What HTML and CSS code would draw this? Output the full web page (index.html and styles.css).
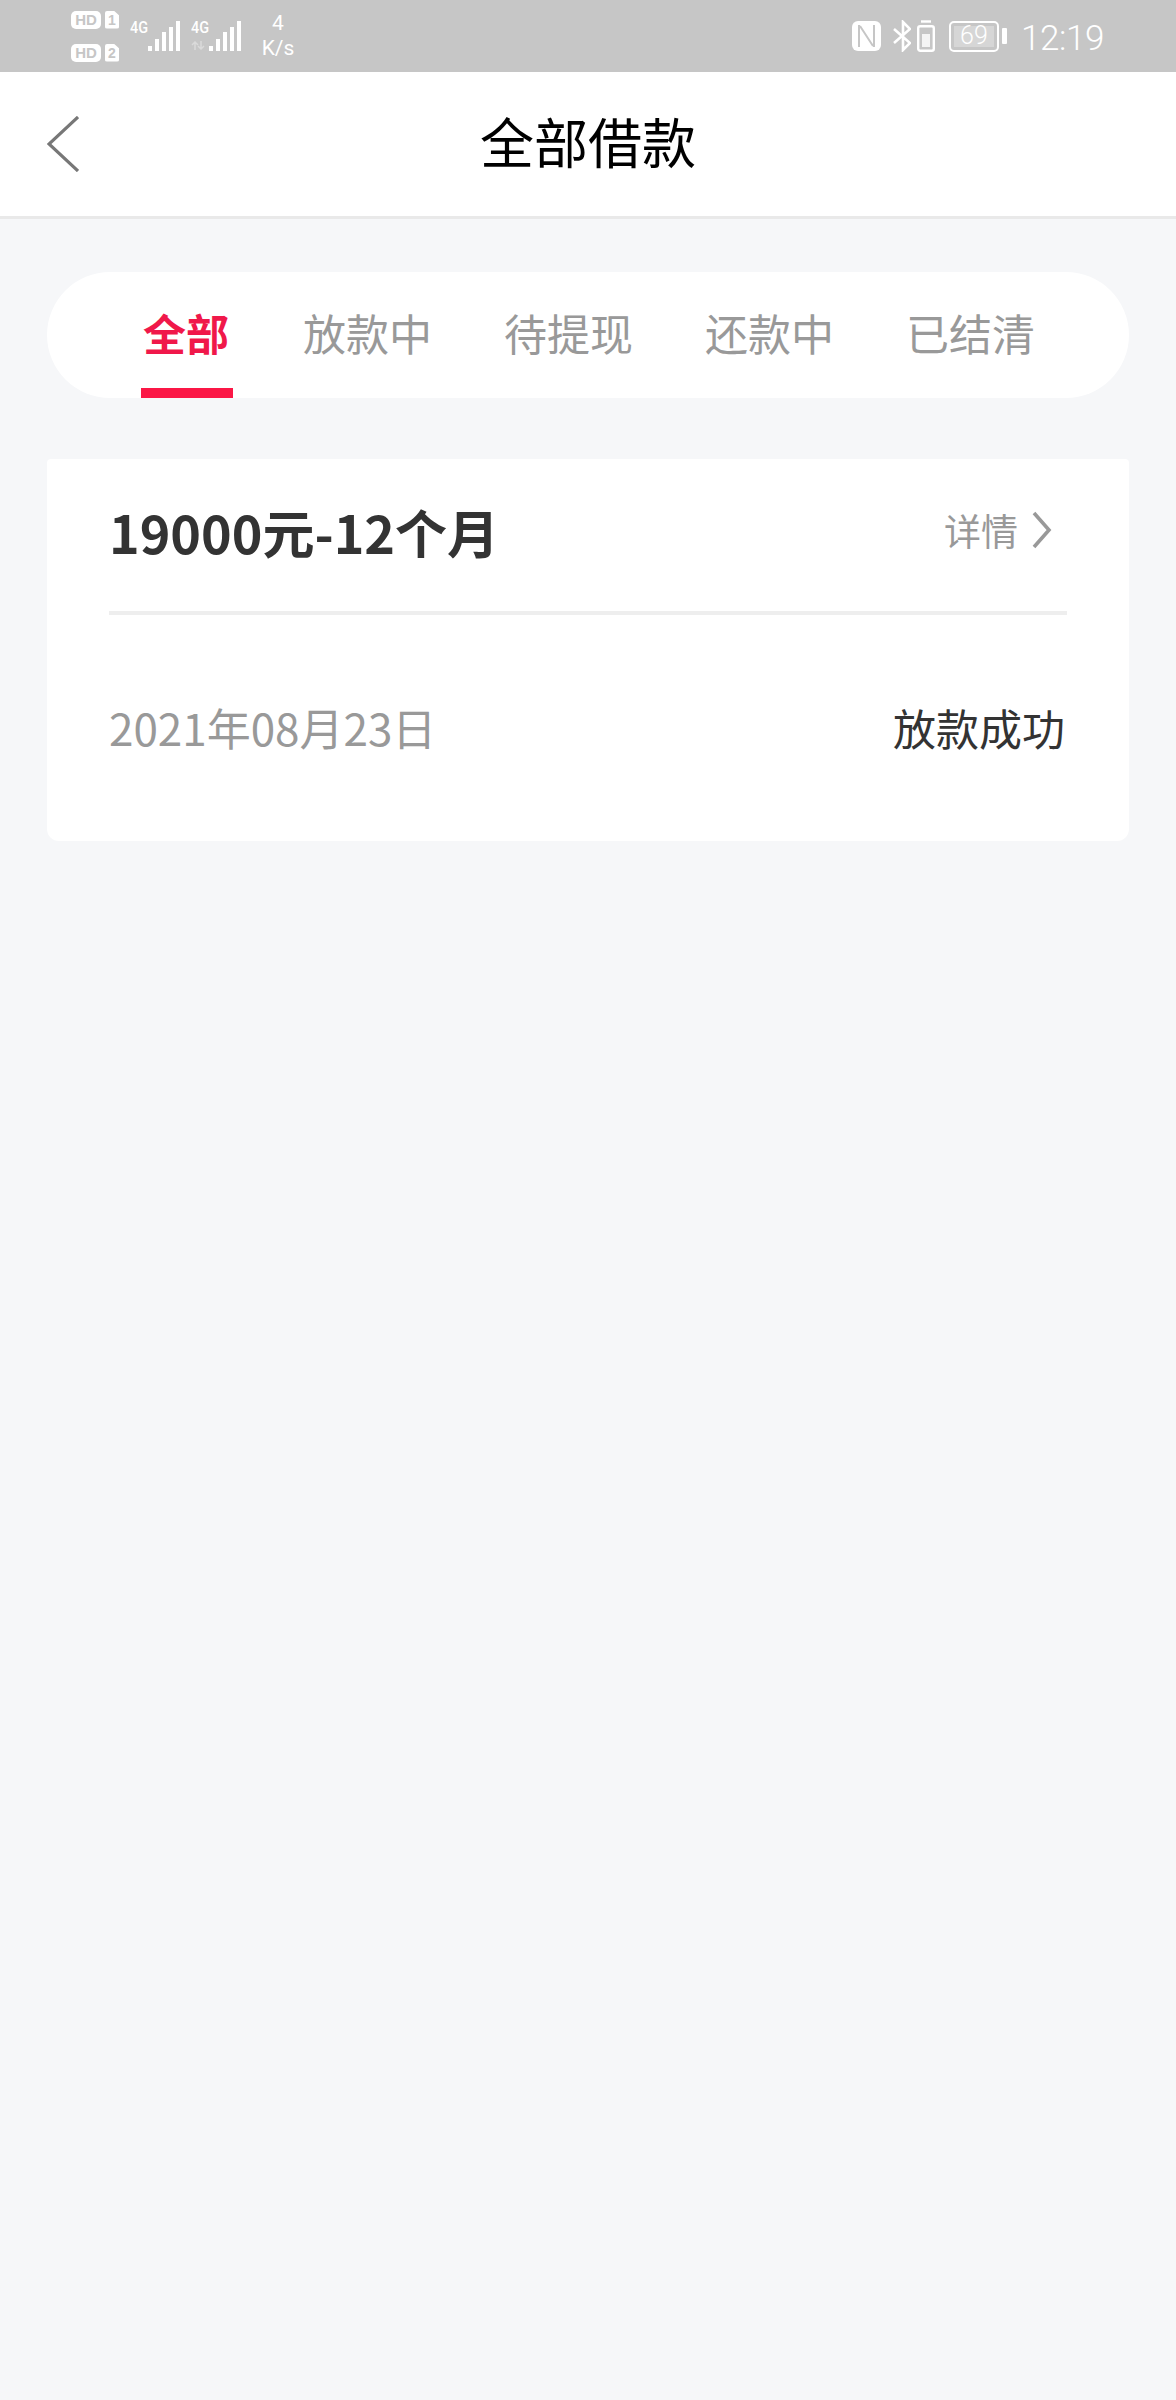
FILE: index.html
```html
<!DOCTYPE html>
<html lang="zh-CN">
<head>
<meta charset="utf-8">
<title>全部借款</title>
<link rel="stylesheet" href="styles.css">
</head>
<body>
<div class="status">
  <div class="status-left">
    <div class="sims">
      <div class="sim"><span class="hd">HD</span><span class="num">1</span></div>
      <div class="sim"><span class="hd">HD</span><span class="num">2</span></div>
    </div>
    <div class="net">
      <div class="net-label"><span class="g">4G</span></div>
      <svg width="32" height="32" viewBox="0 0 32 32"><g fill="#fff"><rect x="0" y="26" width="4" height="5"/><rect x="7" y="19" width="4" height="12"/><rect x="14" y="12" width="4" height="19"/><rect x="21" y="7" width="4" height="24"/><rect x="28" y="1" width="4" height="30"/></g></svg>
    </div>
    <div class="net net2">
      <div class="net-label">
        <span class="g">4G</span>
        <svg class="arrows" width="14" height="9" viewBox="0 0 14 9"><path d="M4 9V1M1 4l3-3 3 3M10 0v8M7 5l3 3 3-3" fill="none" stroke="#fff" stroke-opacity=".35" stroke-width="1.500"/></svg>
      </div>
      <svg width="32" height="32" viewBox="0 0 32 32"><g fill="#fff"><rect x="0" y="26" width="4" height="5"/><rect x="7" y="19" width="4" height="12"/><rect x="14" y="12" width="4" height="19"/><rect x="21" y="7" width="4" height="24"/><rect x="28" y="1" width="4" height="30"/></g></svg>
    </div>
    <div class="speed"><span>4</span><span>K/s</span></div>
  </div>
  <div class="status-right">
    <svg class="nfc" width="29" height="30" viewBox="0 0 29 30"><rect width="29" height="30" rx="6" fill="#fff"/><path d="M7 4v22M22 4v22M8 5l13 20" fill="none" stroke="#c6c6c6" stroke-width="2"/></svg>
    <svg class="bt" width="18" height="32" viewBox="0 0 18 32"><path d="M1 9l16 14-7 7V2l7 7L1 23" fill="none" stroke="#fff" stroke-width="2.600"/></svg>
    <svg class="sbat" width="18" height="32" viewBox="0 0 18 32"><path d="M4 1.500h10" stroke="#fff" stroke-width="2.400"/><rect x="1.200" y="6.200" width="15.600" height="24.600" rx="2" fill="none" stroke="#fff" stroke-width="2.400"/><rect x="5" y="14" width="8" height="13" fill="#fff" fill-opacity=".8"/></svg>
    <div class="battery"><span class="level">69</span></div>
    <span class="cap"></span>
    <span class="time">12:19</span>
  </div>
</div>
<header class="nav">
  <svg class="back" width="32" height="56" viewBox="0 0 32 56"><path d="M31 1L2 28l29 27" fill="none" stroke="#777" stroke-width="3.200"/></svg>
  <h1 class="title">全部借款</h1>
  <span></span>
</header>
<main class="content">
  <nav class="tabs">
    <span class="tab active">全部</span>
    <span class="tab">放款中</span>
    <span class="tab">待提现</span>
    <span class="tab">还款中</span>
    <span class="tab">已结清</span>
  </nav>
  <section class="card">
    <div class="card-head">
      <span class="amount">19000元-12个月</span>
      <span class="detail">详情<svg width="20" height="38" viewBox="0 0 20 38"><path d="M2 2l15 17L2 36" fill="none" stroke="#999" stroke-width="3.600"/></svg></span>
    </div>
    <div class="card-body">
      <span class="date">2021年08月23日</span>
      <span class="state">放款成功</span>
    </div>
  </section>
</main>
</body>
</html>
```
FILE: styles.css
```css
* { box-sizing: border-box; }
html, body { margin: 0; padding: 0; }
body {
  min-height: 2400px;
  background: #f6f7f9;
  font-family: "Noto Sans CJK SC", "Noto Sans", sans-serif;
}
.status {
  height: 72px;
  background: #c6c6c6;
  color: #fff;
  display: flex;
  justify-content: space-between;
  align-items: center;
  padding: 0 72px 0 71px;
}
.status-left { display: flex; align-items: center; }
.sims { display: flex; flex-direction: column; gap: 15px; width: 59px; }
.sim { display: flex; gap: 4px; height: 18px; }
.hd, .num {
  background: #fff;
  color: #c6c6c6;
  font: 700 15px/18px "Liberation Sans", sans-serif;
  text-align: center;
}
.hd { width: 30px; border-radius: 5px; }
.num {
  width: 14px;
  border-radius: 2px;
  font-size: 14px;
  clip-path: polygon(0 0, 62% 0, 100% 26%, 100% 100%, 0 100%);
}
.net { display: flex; width: 61px; }
.net2 { width: 50px; }
.net-label { display: flex; flex-direction: column; width: 18px; }
.g {
  font: 500 17px/15px "Roboto", sans-serif;
  transform: scaleX(.85);
  transform-origin: left top;
  white-space: nowrap;
}
.arrows { margin-top: 6px; }
.speed {
  display: flex;
  flex-direction: column;
  align-items: center;
  font: 400 21px/25px "Roboto", sans-serif;
  width: 36px;
  margin-left: 19px;
}
.status-right { display: flex; align-items: center; }
.nfc { margin-right: 12px; }
.bt { margin-right: 6px; }
.sbat { margin-right: 14px; }
.battery {
  width: 50px;
  height: 31px;
  border: 2.500px solid #fff;
  border-radius: 5px;
  padding: 3px;
  display: flex;
}
.level {
  flex: 1;
  background: rgba(255,255,255,.28);
  font: 300 25px/20px "Roboto", sans-serif;
  text-align: center;
}
.cap { width: 5px; height: 16px; background: #fff; margin: 0 14px 0 3px; border-radius: 1px; }
.time {
  font: 300 35px/40px "Roboto", sans-serif;
  letter-spacing: -.4px;
  margin-top: 6px;
}
.nav {
  height: 147px;
  background: #fff;
  border-bottom: 3px solid #e9e9e9;
  display: grid;
  grid-template-columns: 1fr auto 1fr;
  align-items: center;
  padding: 0 47px;
}
.title {
  margin: 0 0 6px;
  font-size: 54px;
  line-height: 70px;
  font-weight: 400;
  color: #000;
}
.content { padding: 53px 47px 0; }
.tabs {
  height: 126px;
  background: #fff;
  border-radius: 63px;
  display: flex;
  align-items: center;
  gap: 72px;
  padding: 0 0 6px 96px;
}
.tab {
  font-size: 43px;
  line-height: 60px;
  color: #999;
  position: relative;
  height: 60px;
  white-space: nowrap;
}
.tab.active {
  color: #f0184a;
  font-weight: 700;
  margin-right: 2px;
}
.tab.active::after {
  content: "";
  position: absolute;
  left: -2px;
  right: -4px;
  top: 86px;
  height: 10px;
  background: #fb1746;
}
.card {
  margin-top: 61px;
  height: 382px;
  background: #fff;
  border-radius: 4px 4px 12px 12px;
  padding: 0 62px;
}
.card-head {
  height: 156px;
  border-bottom: 4px solid #eee;
  display: flex;
  justify-content: space-between;
  align-items: center;
}
.amount {
  font-size: 52px;
  font-weight: 700;
  color: #333;
  line-height: 70px;
  margin-top: -7px;
}
.detail {
  font-size: 37px;
  color: #999;
  display: flex;
  align-items: center;
  gap: 14px;
  padding-right: 15px;
  margin-top: -10px;
}
.card-body {
  height: 226px;
  display: flex;
  justify-content: space-between;
  align-items: center;
  font-size: 44px;
  padding-bottom: 2px;
}
.date { color: #999; }
.state { color: #333; font-size: 43px; padding-right: 2px; }
```
